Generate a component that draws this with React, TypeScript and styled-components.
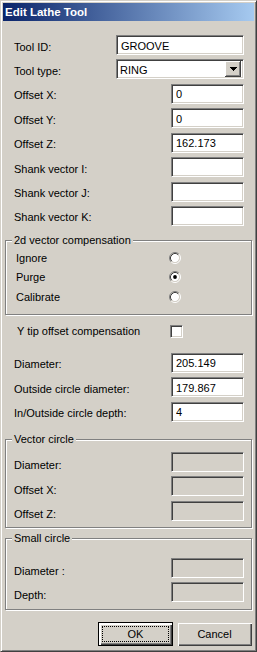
import styled, { createGlobalStyle } from "styled-components";

const GlobalStyle = createGlobalStyle`
  html, body {
    margin: 0;
    padding: 0;
    background: #d4d0c8;
  }
  body {
    font-family: "Liberation Sans", Arial, sans-serif;
    font-size: 11px;
    color: #000;
  }
  * {
    box-sizing: border-box;
  }
`;

const Window = styled.div`
  width: 257px;
  height: 652px;
  background: #d4d0c8;
  border: 1px solid;
  border-color: #d4d0c8 #404040 #404040 #d4d0c8;
  box-shadow: inset 1px 1px 0 #fff, inset -1px -1px 0 #808080;
  padding: 2px;
  display: flex;
  flex-direction: column;
`;

const TitleBar = styled.div`
  height: 18px;
  flex-shrink: 0;
  background: linear-gradient(to right, #0a246a, #a6caf0);
  color: #fff;
  font-weight: bold;
  font-size: 11.5px;
  line-height: 18px;
  padding-left: 2px;
  white-space: nowrap;
`;

const FieldList = styled.div<{ $top: number }>`
  display: flex;
  flex-direction: column;
  gap: 4.43px;
  margin-top: ${({ $top }) => $top}px;
  padding: 0 10px 0 11px;
`;

const Row = styled.div`
  display: flex;
  align-items: center;
  justify-content: space-between;
  height: 20px;
`;

const Label = styled.span<{ $drop?: number }>`
  padding-top: ${({ $drop }) => $drop ?? 3}px;
  white-space: nowrap;
`;

const TextBox = styled.input<{ $wide?: boolean }>`
  width: ${({ $wide }) => ($wide ? 128 : 73)}px;
  height: 20px;
  margin: 0;
  padding: 1px 0 0 4px;
  font: inherit;
  color: #000;
  background: #fff;
  border: 1px solid;
  border-color: #808080 #fff #fff #808080;
  box-shadow: inset 1px 1px 0 #404040, inset -1px -1px 0 #d4d0c8;
  border-radius: 0;
  outline: none;

  &:disabled {
    background: #d4d0c8;
  }
`;

const Select = styled.div`
  width: 128px;
  height: 20px;
  display: flex;
  align-items: center;
  padding: 2px;
  background: #fff;
  border: 1px solid;
  border-color: #808080 #fff #fff #808080;
  box-shadow: inset 1px 1px 0 #404040, inset -1px -1px 0 #d4d0c8;
`;

const SelectText = styled.span`
  flex: 1;
  padding: 1px 0 0 1px;
`;

const DropButton = styled.span`
  width: 16px;
  height: 16px;
  display: flex;
  align-items: center;
  justify-content: center;
  background: #d4d0c8;
  box-shadow: inset -1px -1px 0 #404040, inset 1px 1px 0 #fff,
    inset -2px -2px 0 #808080;
`;

const Group = styled.div<{ $top: number; $pt: number; $pb: number }>`
  position: relative;
  margin: ${({ $top }) => $top}px 2px 0 2px;
  padding: ${({ $pt }) => $pt}px 7px ${({ $pb }) => $pb}px 8px;
  border: 1px solid #808080;
  box-shadow: inset 1px 1px 0 #fff, 1px 1px 0 #fff;
`;

const GroupTitle = styled.span`
  position: absolute;
  top: -7px;
  left: 6px;
  padding: 0 2px;
  line-height: 13px;
  background: #d4d0c8;
  white-space: nowrap;
`;

const GroupFields = styled.div`
  display: flex;
  flex-direction: column;
  gap: 4.43px;
`;

const OptionRow = styled.div<{ $indent: number }>`
  display: flex;
  align-items: center;
  height: 19.5px;
  padding-left: ${({ $indent }) => $indent}px;
`;

const OptionLabel = styled.span`
  width: 153px;
  white-space: nowrap;
`;

const CheckRow = styled(OptionRow)`
  height: 20px;
  margin-top: 6.5px;
`;

const CheckBox = styled.span`
  width: 13px;
  height: 13px;
  background: #fff;
  border: 1px solid;
  border-color: #808080 #fff #fff #808080;
  box-shadow: inset 1px 1px 0 #404040, inset -1px -1px 0 #d4d0c8;
`;

const ButtonBar = styled.div`
  display: flex;
  justify-content: flex-end;
  gap: 4px;
  margin: 12px 2px 0 0;
`;

const Button = styled.button<{ $default?: boolean }>`
  width: 75px;
  height: 24px;
  margin: 0;
  padding: 3px;
  display: flex;
  font: inherit;
  color: #000;
  background: #d4d0c8;
  border: ${({ $default }) => ($default ? "1px solid #000" : "none")};
  box-shadow: inset 1px 1px 0 ${({ $default }) => ($default ? "#fff" : "#d4d0c8")},
    inset 2px 2px 0 #fff, inset -1px -1px 0 #404040, inset -2px -2px 0 #808080;
  border-radius: 0;
`;

const ButtonFace = styled.span<{ $focus?: boolean }>`
  flex: 1;
  display: flex;
  align-items: center;
  justify-content: center;
  border: 1px dotted ${({ $focus }) => ($focus ? "#000" : "transparent")};
`;

const Radio = ({ checked }: { checked?: boolean }) => (
  <svg width="12" height="12" viewBox="0 0 12 12">
    <circle cx="6" cy="6" r="4.2" fill="#fff" />
    <path d="M2.11 9.89 A5.5 5.5 0 0 1 9.89 2.11" fill="none" stroke="#808080" />
    <path d="M9.89 2.11 A5.5 5.5 0 0 1 2.11 9.89" fill="none" stroke="#fff" />
    <path d="M2.82 9.18 A4.5 4.5 0 0 1 9.18 2.82" fill="none" stroke="#404040" />
    <path d="M9.18 2.82 A4.5 4.5 0 0 1 2.82 9.18" fill="none" stroke="#d4d0c8" />
    {checked && <circle cx="6" cy="6" r="1.9" fill="#000" />}
  </svg>
);

const DownArrow = () => (
  <svg width="7" height="4" viewBox="0 0 7 4" shapeRendering="crispEdges">
    <rect x="0" y="0" width="7" height="1" fill="#000" />
    <rect x="1" y="1" width="5" height="1" fill="#000" />
    <rect x="2" y="2" width="3" height="1" fill="#000" />
    <rect x="3" y="3" width="1" height="1" fill="#000" />
  </svg>
);

type Field = { label: string; value?: string };

const toolFields: Field[] = [
  { label: "Offset X:", value: "0" },
  { label: "Offset Y:", value: "0" },
  { label: "Offset Z:", value: "162.173" },
  { label: "Shank vector I:" },
  { label: "Shank vector J:" },
  { label: "Shank vector K:" },
];

const circleFields: Field[] = [
  { label: "Diameter:", value: "205.149" },
  { label: "Outside circle diameter:", value: "179.867" },
  { label: "In/Outside circle depth:", value: "4" },
];

const compensation = [
  { label: "Ignore", checked: false },
  { label: "Purge", checked: true },
  { label: "Calibrate", checked: false },
];

const FieldRow = ({ field, disabled, drop }: { field: Field; disabled?: boolean; drop?: number }) => (
  <Row>
    <Label $drop={drop}>{field.label}</Label>
    <TextBox readOnly disabled={disabled} defaultValue={field.value ?? ""} />
  </Row>
);

export default function App() {
  return (
    <>
      <GlobalStyle />
      <Window>
        <TitleBar>Edit Lathe Tool</TitleBar>

        <FieldList $top={14}>
          <Row>
            <Label>Tool ID:</Label>
            <TextBox $wide readOnly defaultValue="GROOVE" />
          </Row>
          <Row>
            <Label>Tool type:</Label>
            <Select>
              <SelectText>RING</SelectText>
              <DropButton>
                <DownArrow />
              </DropButton>
            </Select>
          </Row>
          {toolFields.map((f) => (
            <FieldRow key={f.label} field={f} />
          ))}
        </FieldList>

        <Group $top={14} $pt={7} $pb={7.5}>
          <GroupTitle>2d vector compensation</GroupTitle>
          {compensation.map((c) => (
            <OptionRow key={c.label} $indent={2}>
              <OptionLabel>{c.label}</OptionLabel>
              <Radio checked={c.checked} />
            </OptionRow>
          ))}
        </Group>

        <CheckRow $indent={14}>
          <OptionLabel>Y tip offset compensation</OptionLabel>
          <CheckBox />
        </CheckRow>

        <FieldList $top={11.5}>
          {circleFields.map((f) => (
            <FieldRow key={f.label} field={f} />
          ))}
        </FieldList>

        <Group $top={17} $pt={12} $pb={6}>
          <GroupTitle>Vector circle</GroupTitle>
          <GroupFields>
            {["Diameter:", "Offset X:", "Offset Z:"].map((l) => (
              <FieldRow key={l} field={{ label: l }} disabled drop={7} />
            ))}
          </GroupFields>
        </Group>

        <Group $top={10} $pt={19} $pb={6.6}>
          <GroupTitle>Small circle</GroupTitle>
          <GroupFields>
            {["Diameter :", "Depth:"].map((l) => (
              <FieldRow key={l} field={{ label: l }} disabled drop={6} />
            ))}
          </GroupFields>
        </Group>

        <ButtonBar>
          <Button $default>
            <ButtonFace $focus>OK</ButtonFace>
          </Button>
          <Button>
            <ButtonFace>Cancel</ButtonFace>
          </Button>
        </ButtonBar>
      </Window>
    </>
  );
}
